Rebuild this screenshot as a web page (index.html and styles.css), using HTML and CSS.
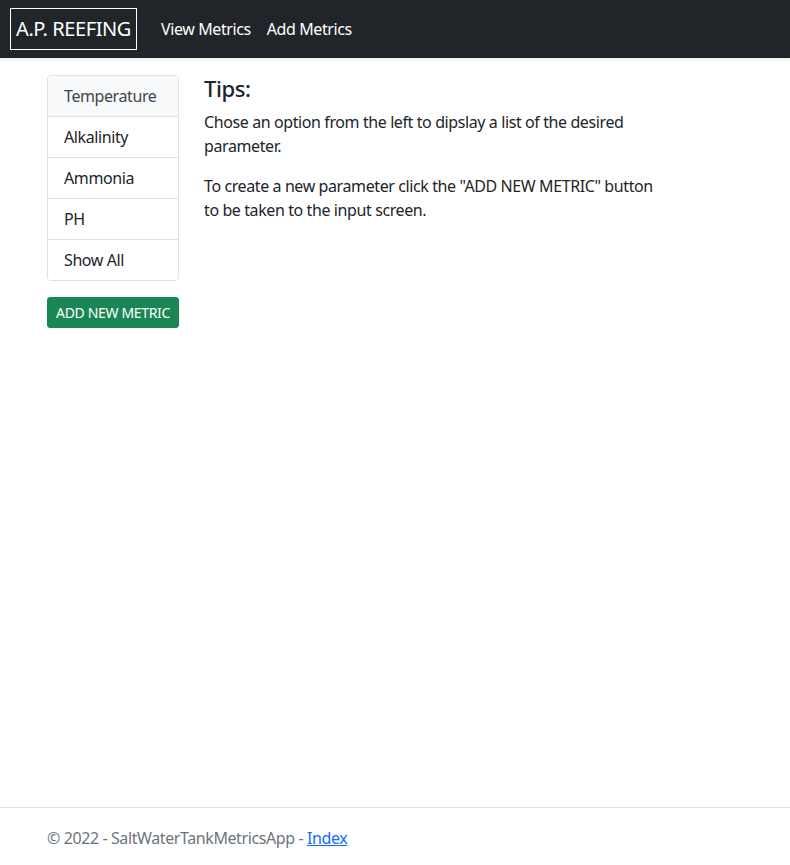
FILE: index.html
```html
<!DOCTYPE html>
<html lang="en">
<head>
<meta charset="utf-8">
<title>A.P. REEFING</title>
<link rel="stylesheet" href="styles.css">
</head>
<body>
<header class="navbar">
  <a class="brand" href="#">A.P. REEFING</a>
  <nav class="nav">
    <a class="nav-link" href="#">View Metrics</a>
    <a class="nav-link" href="#">Add Metrics</a>
  </nav>
</header>
<main class="main">
  <aside class="sidebar">
    <ul class="list-group">
      <li class="list-item active">Temperature</li>
      <li class="list-item">Alkalinity</li>
      <li class="list-item">Ammonia</li>
      <li class="list-item">PH</li>
      <li class="list-item">Show All</li>
    </ul>
    <button class="btn-add" type="button">ADD NEW METRIC</button>
  </aside>
  <section class="content">
    <h4 class="tips-title">Tips:</h4>
    <p>Chose an option from the left to dipslay a list of the desired parameter.</p>
    <p>To create a new parameter click the "ADD NEW METRIC" button to be taken to the input screen.</p>
  </section>
</main>
<footer class="footer">
  <div class="footer-inner">&copy; 2022 - SaltWaterTankMetricsApp - <a href="#">Index</a></div>
</footer>
</body>
</html>
```
FILE: styles.css
```css
* { box-sizing: border-box; }
html, body { margin: 0; padding: 0; }
body {
  font-family: "Noto Sans", "Open Sans", sans-serif;
  font-size: 16px;
  letter-spacing: -0.4px;
  line-height: 1.5;
  color: #212529;
  background: #fff;
  min-height: 100vh;
  display: flex;
  flex-direction: column;
}
.navbar {
  background: #212529;
  height: 58px;
  padding: 8px 10px;
  display: flex;
  align-items: center;
  box-shadow: 0 1px 4px rgba(0,0,0,0.12);
  position: relative;
  z-index: 1;
}
.brand {
  color: #fff;
  text-decoration: none;
  font-size: 20px;
  line-height: 30px;
  padding: 5px 5px;
  border: 1px solid #fff;
  margin-right: 16px;
  white-space: nowrap;
}
.nav { display: flex; }
.nav-link {
  color: #fff;
  text-decoration: none;
  padding: 8px 8px;
  line-height: 24px;
}
.main {
  flex: 1;
  display: flex;
  padding: 17px 0 0 47px;
  gap: 25px;
}
.sidebar { width: 132px; flex: none; }
.list-group {
  list-style: none;
  margin: 0;
  padding: 0;
  border: 1px solid #dee2e6;
  border-radius: 4px;
  overflow: hidden;
}
.list-item {
  padding: 8px 16px;
  line-height: 24px;
  border-top: 1px solid #dee2e6;
  background: #fff;
}
.list-item:first-child { border-top: 0; }
.list-item.active { background: #f8f9fa; color: #41464b; }
.btn-add {
  margin-top: 16px;
  width: 100%;
  height: 31px;
  background: #198754;
  border: 1px solid #198754;
  border-radius: 3px;
  color: #fff;
  font-family: inherit;
  font-size: 14px;
  letter-spacing: -0.35px;
  line-height: 21px;
  padding: 4px 6px;
  white-space: nowrap;
}
.content { width: 465px; }
.tips-title {
  margin: 0 0 8px;
  font-size: 22px;
  font-weight: 500;
  line-height: 27px;
}
.content p { margin: 0 0 16px; }
.footer {
  border-top: 1px solid #dee2e6;
  height: 58px;
  line-height: 60px;
  color: #6c757d;
  white-space: nowrap;
}
.footer-inner { padding-left: 47px; }
.footer a { color: #0d6efd; }
```
